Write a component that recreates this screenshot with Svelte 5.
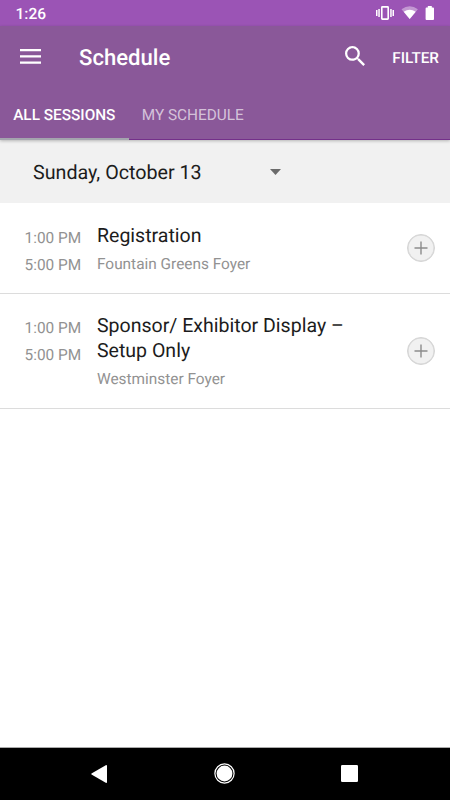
<script>
  let activeTab = 'all'
  let added = []

  const tabs = [
    { id: 'all', label: 'ALL SESSIONS' },
    { id: 'mine', label: 'MY SCHEDULE' }
  ]

  const sessions = [
    {
      start: '1:00 PM',
      end: '5:00 PM',
      title: 'Registration',
      place: 'Fountain Greens Foyer'
    },
    {
      start: '1:00 PM',
      end: '5:00 PM',
      title: 'Sponsor/ Exhibitor Display – Setup Only',
      place: 'Westminster Foyer'
    }
  ]

  $: visible = activeTab === 'all' ? sessions : sessions.filter(s => added.includes(s))

  function toggle (session) {
    added = added.includes(session)
      ? added.filter(s => s !== session)
      : [...added, session]
  }
</script>

<div class="screen">
  <div class="status-bar">
    <span class="clock">1:26</span>
    <svg width="60" height="16" viewBox="0 0 60 16" fill="#fff">
      <path d="M0 5h1.500v6H0zM2.300 4h1.500v8H2.300zM14.200 4h1.500v8h-1.500zM16.500 5H18v6h-1.500z" />
      <rect x="5.8" y="1.9" width="6.4" height="12.2" rx=".6" fill="none" stroke="#fff" stroke-width="1.6" />
      <path d="M25.500 4.300Q33.700 -1.700 41.900 4.300L33.700 14z" opacity=".4" />
      <path d="M27.700 6.700Q33.700 2.700 39.700 6.700L33.700 14z" />
      <path d="M51.800 1h4v1.600h1.300q.9 0 .9.900v10.600q0 .9-.9.900h-6.600q-.9 0-.9-.9V3.500q0-.9.900-.9h1.300z" />
    </svg>
  </div>

  <header>
    <div class="toolbar">
      <button class="menu" type="button" aria-label="Menu">
        <svg width="21" height="15" viewBox="0 0 21 15" fill="#fff">
          <path d="M0 0h21v2.300H0zM0 6.200h21v2.300H0zM0 12.400h21v2.300H0z" />
        </svg>
      </button>
      <h1>Schedule</h1>
      <button class="search" type="button" aria-label="Search">
        <svg width="20" height="20" viewBox="3 3 17.500 17.500" fill="#fff">
          <path d="M15.500 14h-.79l-.28-.27A6.471 6.471 0 0 0 16 9.500 6.500 6.500 0 1 0 9.500 16c1.610 0 3.090-.59 4.230-1.570l.27.28v.79l5 4.990L20.490 19l-4.990-5zm-6 0C7.010 14 5 11.990 5 9.500S7.010 5 9.500 5 14 7.010 14 9.500 11.990 14 9.500 14z" />
        </svg>
      </button>
      <button class="filter" type="button">FILTER</button>
    </div>
    <nav class="tabs">
      {#each tabs as tab}
        <button
          class="tab"
          class:active={activeTab === tab.id}
          type="button"
          on:click={() => (activeTab = tab.id)}
        >{tab.label}</button>
      {/each}
    </nav>
  </header>

  <button class="date" type="button">
    <span>Sunday, October 13</span>
    <svg width="11" height="6" viewBox="0 0 11 6" fill="#6b6b6b">
      <path d="M0 0h11L5.500 6z" />
    </svg>
  </button>

  <main>
    {#each visible as session}
      <article>
        <div class="times">
          <div>{session.start}</div>
          <div>{session.end}</div>
        </div>
        <div class="details">
          <h2>{session.title}</h2>
          <p>{session.place}</p>
        </div>
        <button class="add" type="button" aria-label="Add" on:click={() => toggle(session)}>
          <svg width="14" height="14" viewBox="0 0 14 14" stroke="#8c8c8c" stroke-width="1.400">
            <path d="M7 .5v13M.5 7h13" />
          </svg>
        </button>
      </article>
    {/each}
  </main>

  <footer>
    <svg width="16" height="18" viewBox="0 0 16 18" fill="#fff">
      <path d="M15.200 0Q16 0 16 .8v16.400q0 .8-.8.800L.5 9.600Q0 9 .5 8.400z" />
    </svg>
    <svg width="21" height="21" viewBox="0 0 21 21" fill="#fff">
      <circle cx="10.500" cy="10.500" r="9.600" fill="none" stroke="#fff" stroke-width="1.200" />
      <circle cx="10.500" cy="10.500" r="7.900" />
    </svg>
    <svg width="17" height="17" viewBox="0 0 17 17" fill="#fff">
      <rect width="17" height="17" rx="1.300" />
    </svg>
  </footer>
</div>

<style>
  :global(body) {
    margin: 0;
  }

  .screen {
    background: #fff;
    display: flex;
    flex-direction: column;
    font-family: Roboto, sans-serif;
    height: 800px;
    overflow: hidden;
    text-rendering: geometricPrecision;
    width: 450px;
  }

  svg {
    display: block;
    flex: none;
  }

  button {
    background: none;
    border: 0;
    color: inherit;
    font: inherit;
    margin: 0;
    padding: 0;
    text-rendering: inherit;
  }

  .status-bar {
    align-items: center;
    background: #9b54b5;
    color: #fff;
    display: flex;
    flex: none;
    height: 26px;
    justify-content: space-between;
    padding: 0 14px 0 15.500px;
  }

  .clock {
    font-size: 15.500px;
    font-weight: 500;
    line-height: 26px;
    padding-top: 2px;
  }

  header {
    background: #8a5899;
    border-bottom: 1px solid #74308a;
    box-shadow: 0 1px 3px rgba(0, 0, 0, .25);
    box-sizing: border-box;
    color: #fff;
    flex: none;
    height: 114px;
    z-index: 1;
  }

  .toolbar {
    align-items: center;
    display: flex;
    height: 62px;
    padding: 0 11px 0 20px;
  }

  .menu {
    margin-bottom: 1px;
  }

  h1 {
    flex: 1;
    font-size: 22.100px;
    font-weight: 500;
    line-height: 26px;
    margin: 2px 0 0 38px;
  }

  .search {
    margin: 0 27.500px 2px 0;
  }

  .filter {
    font-size: 15.300px;
    font-weight: 500;
    line-height: 20px;
    margin-top: 1px;
  }

  .tabs {
    display: flex;
    height: 52px;
  }

  .tab {
    border-bottom: 2px solid transparent;
    box-sizing: border-box;
    color: rgba(255, 255, 255, .65);
    font-size: 15.350px;
    height: 52px;
    padding: 3px 13.200px 0;
  }

  .tab.active {
    border-color: #a4a5ae;
    color: #fff;
    font-weight: 500;
  }

  .date {
    align-items: center;
    background: #f1f1f1;
    color: #1c1c1c;
    display: flex;
    flex: none;
    font-size: 19.700px;
    height: 63px;
    justify-content: space-between;
    padding: 1px 169.500px 0 33px;
    width: 450px;
  }

  main {
    flex: 1;
  }

  article {
    align-items: center;
    border-bottom: 1px solid #dcdcdc;
    display: flex;
    padding-left: 24.500px;
    padding-right: 15px;
  }

  .times {
    align-self: flex-start;
    color: #929292;
    font-size: 15.400px;
    line-height: 27px;
    padding-top: 21.500px;
    width: 72.500px;
  }

  .details {
    flex: 1;
    padding: 19.500px 0 19px;
  }

  h2 {
    color: #1c1c1c;
    font-size: 19.550px;
    font-weight: 400;
    line-height: 25px;
    margin: 0;
    max-width: 260px;
  }

  p {
    color: #929292;
    font-size: 15.400px;
    line-height: 20px;
    margin: 6px 0 0;
  }

  .add {
    align-items: center;
    background: #f1f1f1;
    border: 1px solid #d4d4d4;
    border-radius: 50%;
    box-shadow: inset 0 0 0 .5px #d4d4d4;
    box-sizing: border-box;
    display: flex;
    height: 28px;
    justify-content: center;
    width: 28px;
  }

  footer {
    align-items: center;
    background: #000;
    border-top: 1px solid #aaa;
    box-sizing: border-box;
    display: flex;
    flex: none;
    height: 53px;
    justify-content: space-between;
    padding: 0 92px 1px 91px;
  }
</style>
